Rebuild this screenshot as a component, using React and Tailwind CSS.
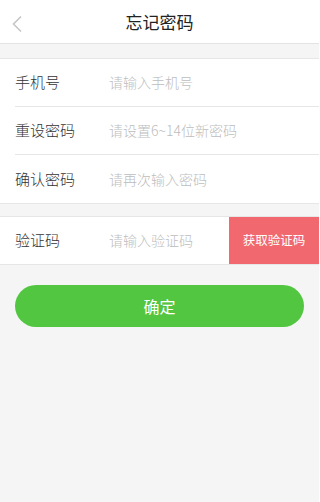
import React from "react";

const font = {
  fontFamily: '"PingFang SC", "Noto Sans CJK SC", "Liberation Sans", sans-serif',
};

const Row = ({ label, placeholder, last }) => (
  <div className="flex h-[48px] items-center pl-[15px]">
    <div
      className={`flex h-full flex-1 items-center ${last ? "" : "border-b border-[#e6e6e6]"}`}
    >
      <span className="w-[94px] text-[15px] font-light text-[#333]">{label}</span>
      <span className="text-[14px] font-light text-[#bdbdbd]">{placeholder}</span>
    </div>
  </div>
);

export default function App() {
  return (
    <div className="flex h-[502px] w-[319px] flex-col bg-[#f5f5f5]" style={font}>
      {/* Header */}
      <div className="relative flex h-[44px] items-center justify-center border-b border-[#e3e3e3] bg-white">
        <svg
          className="absolute left-[11px] top-[15px]"
          width="12"
          height="18"
          viewBox="0 0 12 18"
          fill="none"
        >
          <path d="M10 1.5 L2.5 9 L10 16.5" stroke="#c6c6c6" strokeWidth="1.6" />
        </svg>
        <span className="text-[17px] text-[#222]">忘记密码</span>
      </div>

      {/* Password fields */}
      <div className="mt-[14px] border-y border-[#e6e6e6] bg-white">
        <Row label="手机号" placeholder="请输入手机号" />
        <Row label="重设密码" placeholder="请设置6~14位新密码" />
        <Row label="确认密码" placeholder="请再次输入密码" last />
      </div>

      {/* Verification code */}
      <div className="mt-[12px] flex h-[49px] items-stretch border-y border-[#e6e6e6] bg-white">
        <div className="flex flex-1 items-center pl-[15px]">
          <span className="w-[94px] text-[15px] font-light text-[#333]">验证码</span>
          <span className="text-[14px] font-light text-[#bdbdbd]">请输入验证码</span>
        </div>
        <button className="w-[90px] bg-[#f1686f] text-[12.5px] text-white">获取验证码</button>
      </div>

      {/* Confirm */}
      <div className="px-[15px] pt-[20px]">
        <button className="h-[42px] w-full rounded-full bg-[#52c640] text-[16px] text-white">
          确定
        </button>
      </div>
    </div>
  );
}
